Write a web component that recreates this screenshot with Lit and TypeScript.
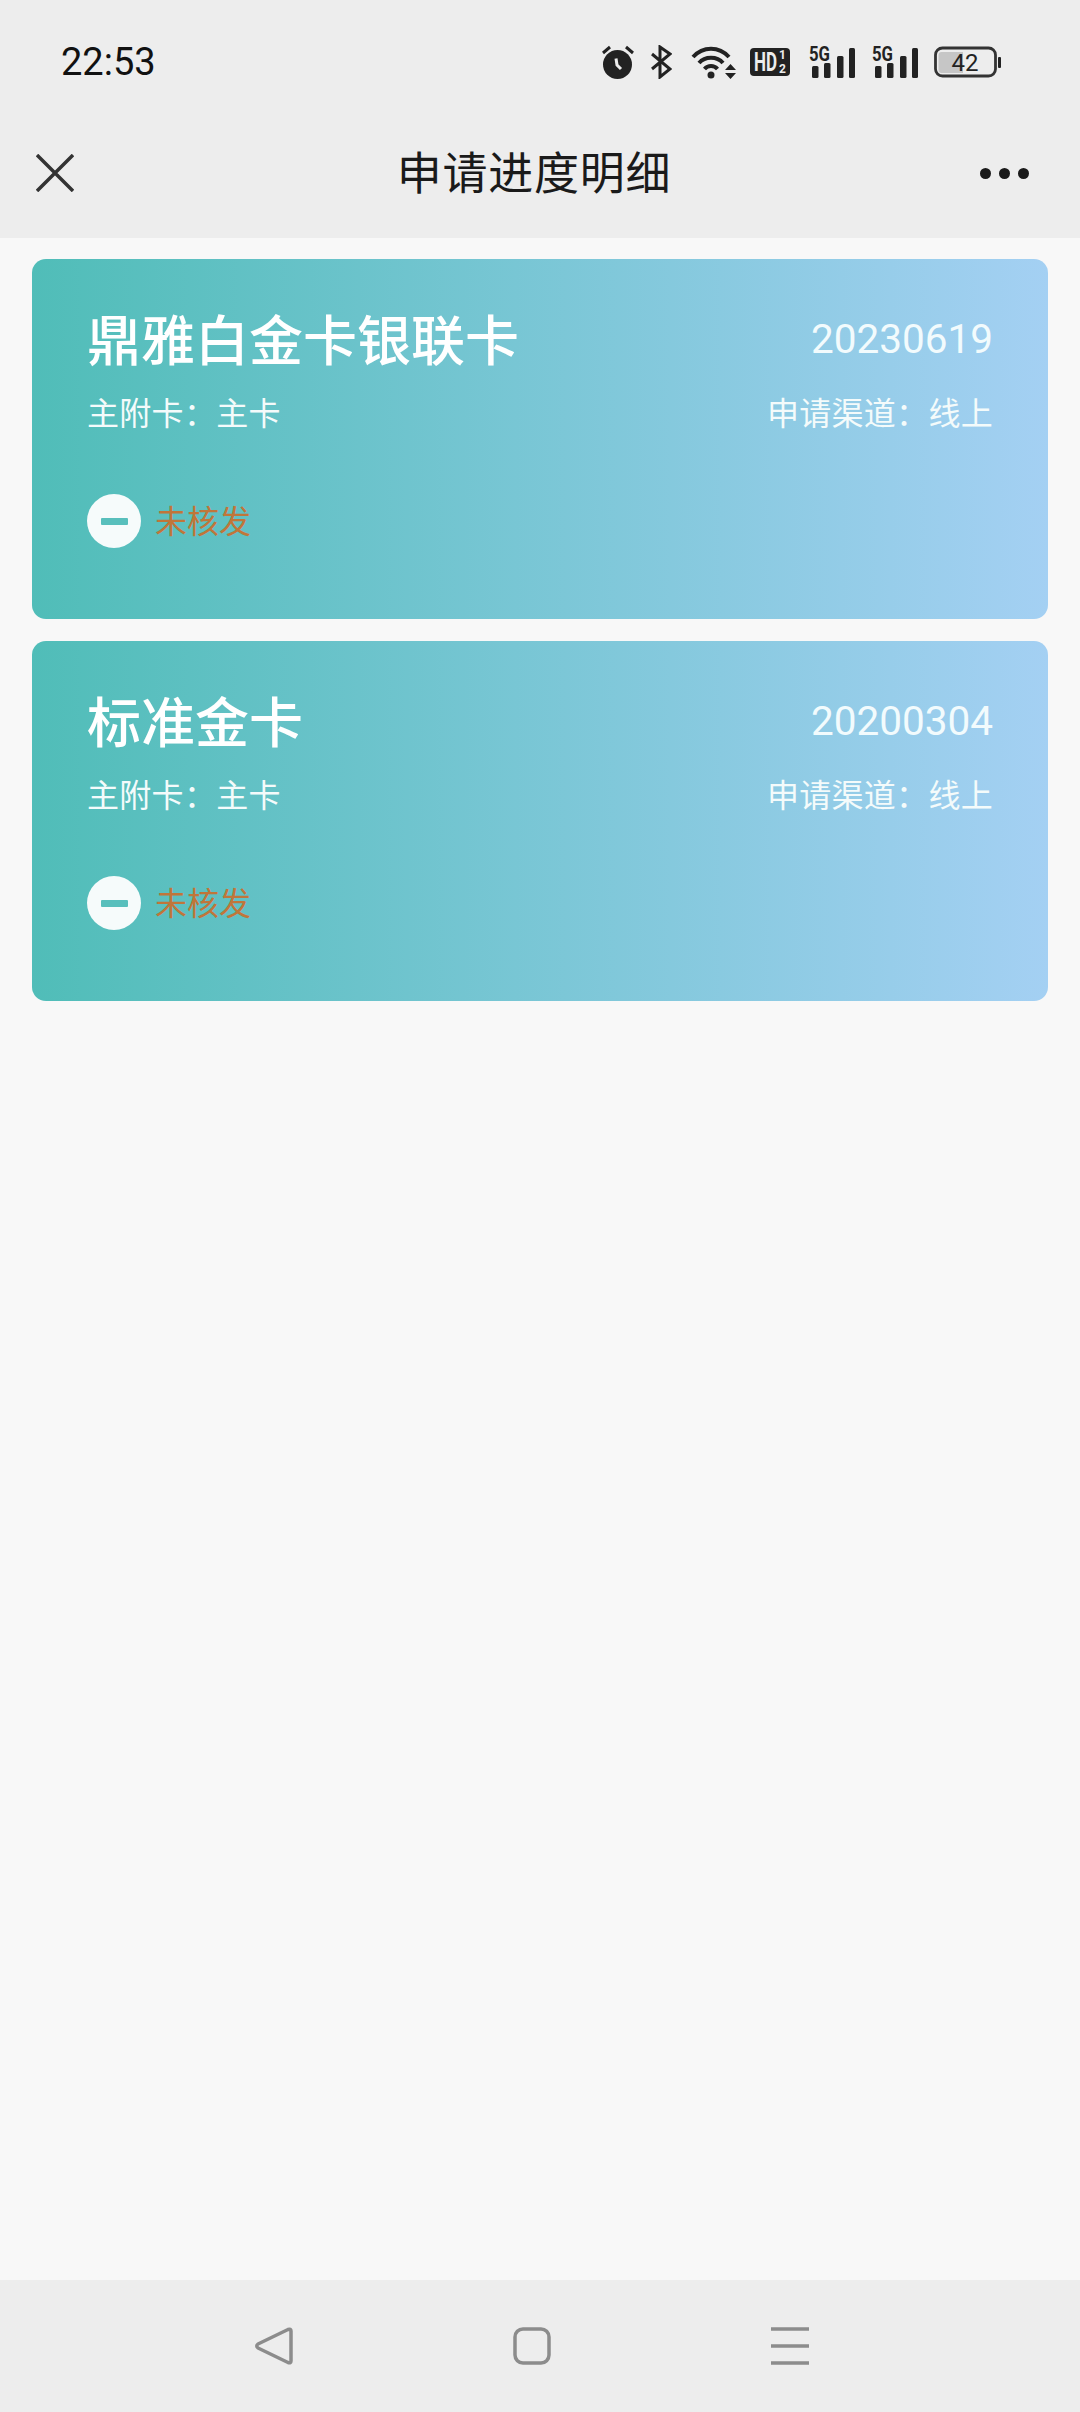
import { LitElement, html, css, svg } from 'lit';
import { customElement } from 'lit/decorators.js';

interface Application {
  name: string;
  date: string;
}

const APPLICATIONS: Application[] = [
  { name: '鼎雅白金卡银联卡', date: '20230619' },
  { name: '标准金卡', date: '20200304' },
];

const signal = svg`
  <text x="1" y="16" class="tiny" textLength="21" lengthAdjust="spacingAndGlyphs">5G</text>
  <rect x="4" y="21" width="6.500" height="12" rx="1.500" />
  <rect x="16" y="18" width="6.500" height="15" rx="1.500" />
  <rect x="29" y="11" width="6.500" height="22" rx="1.500" />
  <rect x="41" y="3" width="6" height="30" rx="1.500" />
`;

@customElement('app-root')
export class AppRoot extends LitElement {
  static styles = css`
    :host {
      display: flex;
      flex-direction: column;
      min-height: 2412px;
      background: #f8f8f8;
      font-family: Roboto, 'Noto Sans CJK SC', sans-serif;
    }

    .status {
      height: 124px;
      box-sizing: border-box;
      padding: 0 78px 0 61px;
      display: flex;
      align-items: center;
      justify-content: space-between;
      background: #ededed;
      color: #111;
    }

    .time {
      font-size: 38px;
      line-height: 1;
    }

    .status-icons {
      display: flex;
      align-items: center;
      gap: 16px;
    }

    .status-icons svg {
      display: block;
      fill: #222;
    }

    /* the glyphs are not evenly spaced on the phone */
    .status-icons svg:nth-child(2) {
      margin-left: 1px;
    }

    .status-icons svg:nth-child(3) {
      margin-left: 3px;
    }

    .status-icons svg:nth-child(4) {
      margin-left: -3px;
    }

    .status-icons svg:nth-child(5) {
      margin-left: 2px;
    }

    /* taller box so the 5G line box stays inside the svg */
    .status-icons svg.sig {
      margin-top: -8px;
    }

    .tiny {
      font: 700 21px Roboto, sans-serif;
    }

    .hd {
      font: 700 25px Roboto, sans-serif;
      fill: #ededed;
    }

    .frac {
      font: 700 12px Roboto, sans-serif;
      fill: #ededed;
    }

    .level {
      font: 400 24px Roboto, sans-serif;
    }

    .header {
      height: 114px;
      display: grid;
      grid-template-columns: 1fr auto 1fr;
      align-items: center;
      padding: 0 48px 16px 36px;
      box-sizing: border-box;
      background: #ededed;
    }

    .title {
      margin-top: 2px;
      font-size: 45px;
      line-height: 1;
      color: #1a1a1a;
      letter-spacing: 0.75px;
    }

    .more {
      justify-self: end;
      display: flex;
      gap: 8px;
      padding-right: 3px;
    }

    .more i {
      width: 11px;
      height: 11px;
      border-radius: 50%;
      background: #1a1a1a;
    }

    .list {
      flex: 1;
      display: flex;
      flex-direction: column;
      gap: 22px;
      padding: 21px 32px;
    }

    .card {
      height: 360px;
      box-sizing: border-box;
      padding: 51px 55px 0 55px;
      border-radius: 14px;
      background: linear-gradient(90deg, #50bdb8, #a4d0f3);
      color: #fff;
    }

    .row {
      display: flex;
      align-items: center;
      justify-content: space-between;
    }

    .name {
      font-size: 54px;
      line-height: 66px;
      font-weight: 500;
    }

    .date {
      font-size: 40.5px;
      padding-bottom: 8px;
      color: #f2fbfd;
    }

    .meta {
      margin-top: 16px;
      font-size: 32px;
      line-height: 44px;
      letter-spacing: 0.3px;
      color: #f4fbfb;
    }

    .result {
      margin-top: 59px;
      display: flex;
      align-items: center;
      gap: 14px;
      font-size: 32px;
      line-height: 54px;
      color: #c0763a;
    }

    .dot {
      width: 54px;
      height: 54px;
      margin-top: -2px;
      border-radius: 50%;
      background: #f6fbfb;
      display: flex;
      align-items: center;
      justify-content: center;
    }

    .dot i {
      width: 27px;
      height: 7px;
      border-radius: 1px;
      background: #58bfbc;
    }

    .nav {
      height: 132px;
      box-sizing: border-box;
      padding: 0 271px 0 255px;
      display: flex;
      align-items: center;
      justify-content: space-between;
      background: #ededed;
    }

    .nav svg {
      display: block;
      fill: none;
      stroke: #8c8c8c;
      stroke-width: 3.5;
    }
  `;

  private renderStatusIcons() {
    return html`
      <div class="status-icons">
        <svg width="32" height="34" viewBox="0 0 32 34">
          <path d="M1 8 8 2M31 8 24 2" stroke="#222" stroke-width="3" />
          <circle cx="15.500" cy="19.500" r="14.500" />
          <path d="M14 13.500 15 20 19 24" stroke="#ededed" stroke-width="3" fill="none" />
        </svg>
        <svg width="21" height="34" viewBox="0 0 21 34">
          <path d="M1 9 19 24 9 32V2L19 9 1 24" stroke="#222" stroke-width="3" fill="none" />
        </svg>
        <svg width="46" height="34" viewBox="0 0 46 34">
          <path d="M2 12C12 1 28 1 38 12M8 18C14 11 26 11 32 18M13.500 24C17 20 23 20 26.500 24" stroke="#222" stroke-width="4" fill="none" />
          <circle cx="20" cy="30" r="3.500" />
          <path d="M34 25H45L39.500 19ZM34 28H45L39.500 34Z" />
        </svg>
        <svg width="40" height="28" viewBox="0 0 40 28">
          <rect width="40" height="28" rx="4" />
          <text transform="translate(4 23) scale(0.68 1)" class="hd">HD</text>
          <text x="29" y="11" class="frac">1</text>
          <text x="29" y="25" class="frac">2</text>
        </svg>
        <svg class="sig" width="47" height="42" viewBox="0 -8 47 42">${signal}</svg>
        <svg class="sig" width="47" height="42" viewBox="0 -8 47 42">${signal}</svg>
        <svg width="68" height="32" viewBox="0 0 68 32">
          <rect x="1.500" y="2" width="60" height="28" rx="7" fill="none" stroke="#333" stroke-width="2.800" />
          <path d="M4.500 9A3 3 0 0 1 7.500 6H29V27H7.500A3 3 0 0 1 4.500 24Z" fill="#c6c6c6" />
          <rect x="64" y="11" width="3" height="11" rx="1" />
          <text x="31" y="25" text-anchor="middle" class="level">42</text>
        </svg>
      </div>
    `;
  }

  private renderCard(app: Application) {
    return html`
      <section class="card">
        <div class="row">
          <span class="name">${app.name}</span>
          <span class="date">${app.date}</span>
        </div>
        <div class="row meta">
          <span>主附卡：主卡</span>
          <span>申请渠道：线上</span>
        </div>
        <div class="result">
          <span class="dot"><i></i></span>
          <span>未核发</span>
        </div>
      </section>
    `;
  }

  render() {
    return html`
      <div class="status">
        <span class="time">22:53</span>
        ${this.renderStatusIcons()}
      </div>
      <header class="header">
        <svg width="38" height="38" viewBox="0 0 38 38">
          <path d="M1 1 37 37M37 1 1 37" stroke="#333" stroke-width="3.500" />
        </svg>
        <span class="title">申请进度明细</span>
        <span class="more"><i></i><i></i><i></i></span>
      </header>
      <main class="list">${APPLICATIONS.map((app) => this.renderCard(app))}</main>
      <nav class="nav">
        <svg width="38" height="38" viewBox="0 0 38 38">
          <path d="M3 17 33 2.500Q36 1.500 36 4V34Q36 36.500 33 35.500L3 21Q0.500 19 3 17Z" stroke-linejoin="round" />
        </svg>
        <svg width="38" height="38" viewBox="0 0 38 38">
          <rect x="2" y="2" width="34" height="34" rx="8" />
        </svg>
        <svg width="38" height="38" viewBox="0 0 38 38">
          <path d="M0 2H38M0 19H38M0 36H38" />
        </svg>
      </nav>
    `;
  }
}

declare global {
  interface HTMLElementTagNameMap {
    'app-root': AppRoot;
  }
}
